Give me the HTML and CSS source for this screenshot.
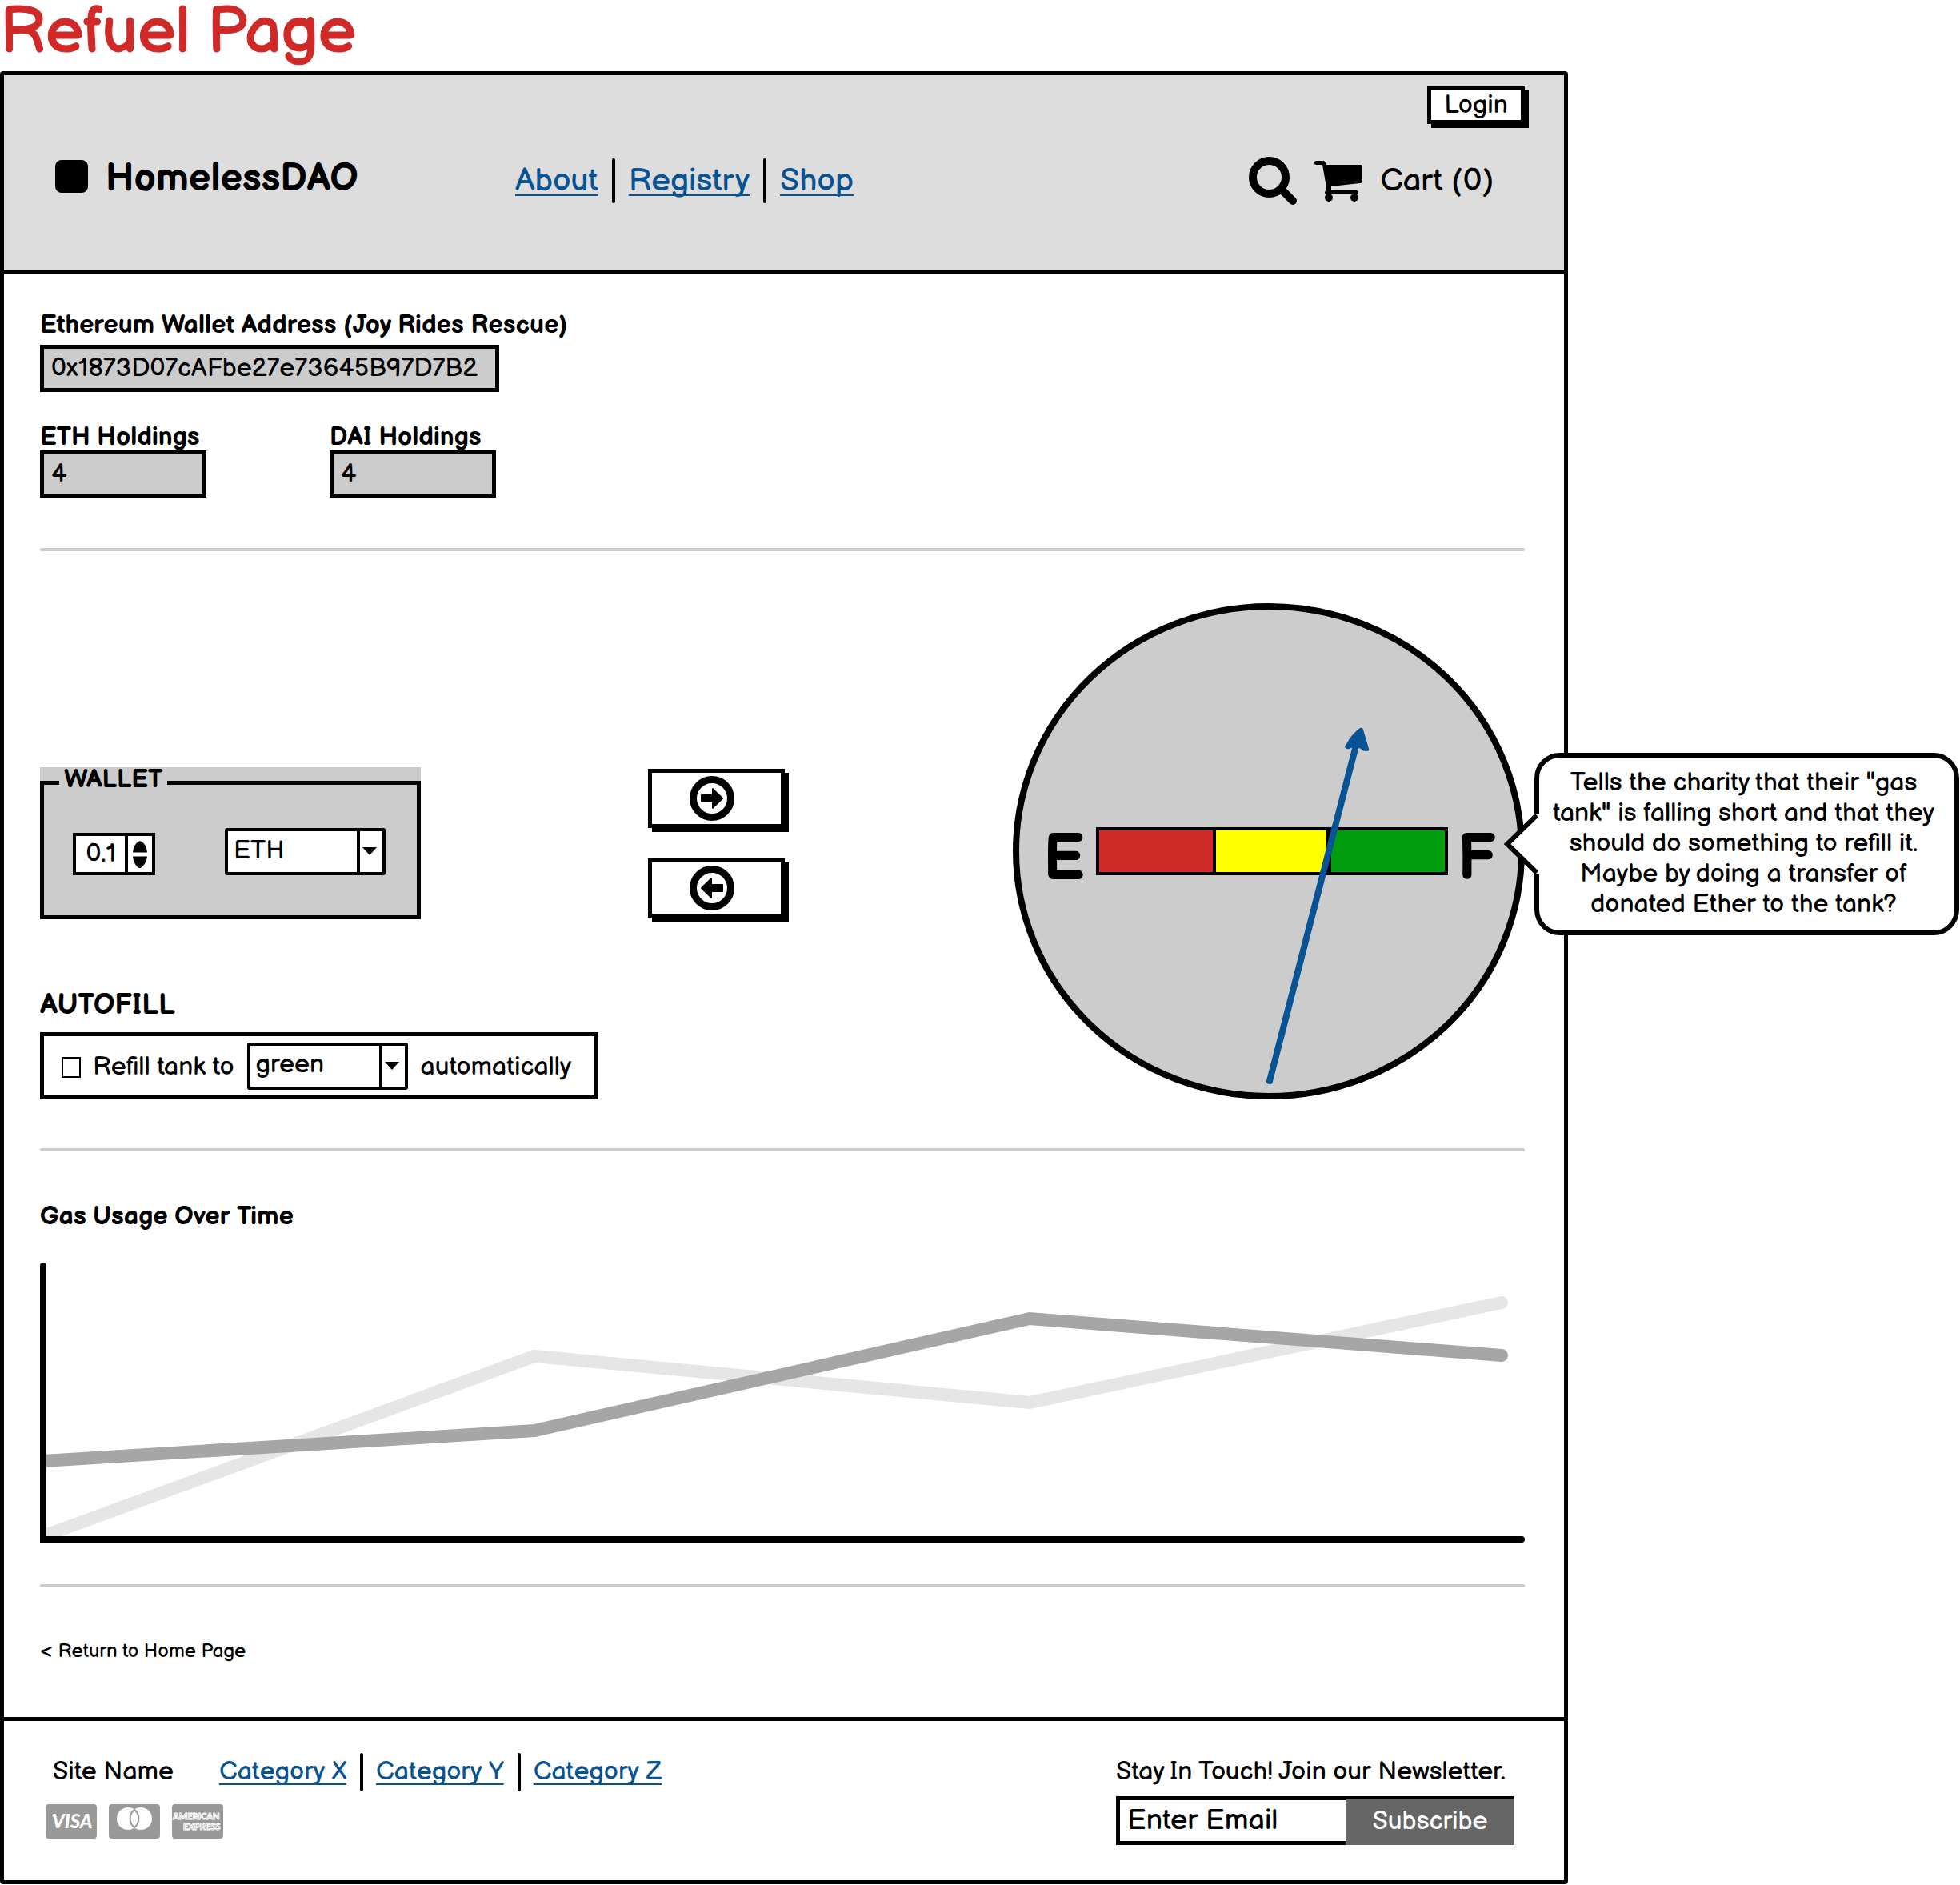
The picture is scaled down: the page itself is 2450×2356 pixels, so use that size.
FILE: index.html
```html
<!DOCTYPE html>
<html lang="en">
<head>
<meta charset="utf-8">
<meta name="viewport" content="width=device-width, initial-scale=1">
<title>Refuel Page</title>
<link rel="stylesheet" href="styles.css">
</head>
<body>
<h1 class="page-title">Refuel Page</h1>
<div class="frame">
  <header class="header">
    <div class="header-top"><button class="button login" type="button">Login</button></div>
    <div class="header-row">
      <div class="brand"><span class="brand-mark"></span>HomelessDAO</div>
      <nav class="links links-large" aria-label="Main">
        <a href="#about">About</a>
        <a href="#registry">Registry</a>
        <a href="#shop">Shop</a>
      </nav>
      <div class="tools">
        <svg class="icon" viewBox="0 0 60 60" aria-hidden="true">
          <circle cx="25.500" cy="25.500" r="20.500" fill="none" stroke="#000" stroke-width="10"/>
          <path d="M42 42L55 55" stroke="#000" stroke-width="10" stroke-linecap="round"/>
        </svg>
        <svg class="icon" viewBox="0 0 60 60" aria-hidden="true">
          <path d="M2.500 5H11q3 0 3.500 5H58q2 0 2 2v18q0 2.500-3 3L21 37v5h-6v-4L10 10H2.500a2.500 2.500 0 0 1 0-5z"/>
          <rect x="13" y="42" width="42" height="5" rx="2.500"/>
          <circle cx="18" cy="51" r="5"/>
          <circle cx="50" cy="51" r="5"/>
        </svg>
        <span class="cart-label">Cart (0)</span>
      </div>
    </div>
  </header>

  <main class="main">
    <section class="holdings">
      <div class="field field-wide">
        <label for="address">Ethereum Wallet Address (Joy Rides Rescue)</label>
        <input class="readout" id="address" type="text" value="0x1873D07cAFbe27e73645B97D7B2" readonly>
      </div>
      <div class="holdings-row">
        <div class="field">
          <label for="eth">ETH Holdings</label>
          <input class="readout" id="eth" type="text" value="4" readonly>
        </div>
        <div class="field">
          <label for="dai">DAI Holdings</label>
          <input class="readout" id="dai" type="text" value="4" readonly>
        </div>
      </div>
    </section>

    <hr class="rule">

    <section class="tank">
      <div class="controls">
        <div class="transfer">
          <div class="wallet">
            <fieldset class="wallet-set">
              <legend>WALLET</legend>
              <div class="wallet-row">
                <span class="stepper">
                  <input type="number" value="0.1" step="0.1" aria-label="Amount">
                  <svg class="stepper-arrows" viewBox="0 0 30 44" aria-hidden="true">
                    <path d="M6 20q1-10 7-13.500 2-1.500 4 0 6 3.500 7 13.500zM6 25q1 9 6 13.500 3 2 5 0 6-4.500 7-13.500z"/>
                  </svg>
                </span>
                <span class="picker">
                  <select aria-label="Currency"><option>ETH</option><option>DAI</option></select>
                  <svg class="picker-arrow" viewBox="0 0 18 10" aria-hidden="true"><path d="M0 0h18L9 10z"/></svg>
                </span>
              </div>
            </fieldset>
          </div>
          <div class="arrows">
            <button class="button arrow" type="button" aria-label="To tank">
              <svg class="arrow-icon" viewBox="0 0 56 56" aria-hidden="true">
                <circle cx="28" cy="28" r="23.500" fill="none" stroke="#000" stroke-width="9"/>
                <path d="M14 24q0-1 1-1h13v-7q1-2 2 0l11.500 11q1 1 0 2L30 40q-1 2-2 0v-7H15q-1 0-1-1z"/>
              </svg>
            </button>
            <button class="button arrow" type="button" aria-label="To wallet">
              <svg class="arrow-icon" viewBox="0 0 56 56" aria-hidden="true">
                <circle cx="28" cy="28" r="23.500" fill="none" stroke="#000" stroke-width="9"/>
                <path d="M42 24q0-1-1-1H28v-7q-1-2-2 0L14.500 27q-1 1 0 2L26 40q1 2 2 0v-7h13q1 0 1-1z"/>
              </svg>
            </button>
          </div>
        </div>
        <h2 class="autofill-title">AUTOFILL</h2>
        <div class="autofill">
          <label class="check"><input type="checkbox">Refill tank to</label>
          <span class="picker">
            <select aria-label="Level"><option>green</option><option>yellow</option><option>red</option></select>
            <svg class="picker-arrow" viewBox="0 0 18 10" aria-hidden="true"><path d="M0 0h18L9 10z"/></svg>
          </span>
          <span class="autofill-end">automatically</span>
        </div>
      </div>

      <div class="gauge">
        <svg class="gauge-dial" viewBox="0 0 640 620" role="img" aria-label="Tank gauge">
          <ellipse cx="320" cy="310" rx="316" ry="306" fill="#ccc" stroke="#000" stroke-width="8"/>
          <path d="M104 280h440v60H104z"/>
          <path d="M108 284h142v52H108z" fill="#cf2a27"/>
          <path d="M254 284h138v52H254z" fill="#ff0"/>
          <path d="M398 284h142v52H398z" fill="#009e0f"/>
          <text class="gauge-mark" x="64" y="345">E</text>
          <text class="gauge-mark" x="580" y="345">F</text>
          <path d="M321 597L429 178" stroke="#085394" stroke-width="8" stroke-linecap="round"/>
          <path d="M434 156q3-1 4 2l7 24q1 3-3 3-5 0-7-3l-6-3q-5 1-8 3-3 1-5-1-2-1 1-5 6-12 17-20z" fill="#085394"/>
        </svg>
        <aside class="bubble">
          <svg class="bubble-tail" viewBox="0 0 44 76" aria-hidden="true">
            <path d="M38 0H44V76H38z" fill="#fff"/>
            <path d="M41 2L4 38L41 74" fill="#fff" stroke="#000" stroke-width="6"/>
          </svg>
          <p>Tells the charity that their "gas tank" is falling short and that they should do something to refill it. Maybe by doing a transfer of donated Ether to the tank?</p>
        </aside>
      </div>
    </section>

    <hr class="rule">

    <section class="usage">
      <h2 class="usage-title">Gas Usage Over Time</h2>
      <svg class="chart" viewBox="0 0 1856 350" role="img" aria-label="Gas usage line chart">
        <g fill="none" stroke-width="16" stroke-linecap="round">
          <path d="M4 342L618 117L1237 175L1827 50" stroke="#e6e6e6"/>
          <path d="M4 248L618 210L1237 70L1827 116" stroke="#a6a6a6"/>
          <path d="M4 4V346H1852" stroke="#000" stroke-width="8"/>
        </g>
      </svg>
    </section>

    <hr class="rule">

    <a class="return" href="#home">&lt; Return to Home Page</a>
  </main>

  <footer class="footer">
    <div class="site">
      <div class="site-row">
        <span>Site Name</span>
        <nav class="links links-plain" aria-label="Categories">
          <a href="#x">Category X</a>
          <a href="#y">Category Y</a>
          <a href="#z">Category Z</a>
        </nav>
      </div>
      <div class="cards">
        <svg class="card" viewBox="0 0 64 43" role="img" aria-label="Visa">
          <rect width="64" height="43" rx="4" fill="#999"/>
          <path d="M7 13q5 0 6 5l1 4-3-4q-1-3-4-5z" fill="#fff"/>
          <text class="card-visa" x="8" y="30">VISA</text>
        </svg>
        <svg class="card" viewBox="0 0 64 43" role="img" aria-label="Mastercard">
          <rect width="64" height="43" rx="4" fill="#999"/>
          <circle cx="24" cy="18" r="14" fill="#fff"/>
          <circle cx="40" cy="18" r="14" fill="#fff"/>
          <path d="M32 7a14 14 0 0 1 0 22a14 14 0 0 1 0-22z" fill="#fff" stroke="#999" stroke-width="2"/>
        </svg>
        <svg class="card" viewBox="0 0 64 43" role="img" aria-label="American Express">
          <rect width="64" height="43" rx="4" fill="#999"/>
          <text class="card-amex" x="1" y="19">AMERICAN</text>
          <text class="card-amex" x="14" y="32">EXPRESS</text>
        </svg>
      </div>
    </div>
    <form class="newsletter">
      <label for="email">Stay In Touch! Join our Newsletter.</label>
      <div class="newsletter-box">
        <input id="email" type="email" placeholder="Enter Email">
        <button type="button">Subscribe</button>
      </div>
    </form>
  </footer>
</div>
</body>
</html>
```
FILE: styles.css
```css
* { box-sizing: border-box; }

body {
  margin: 0;
  background: #fff;
  color: #000;
  font-family: "Balsamiq Sans", Lato, "Open Sans", sans-serif;
  font-size: 32px;
  font-weight: 400;
  line-height: 40px;
}

h1, h2, p, fieldset, legend { margin: 0; padding: 0; }

input, select, button {
  margin: 0;
  border: 0;
  border-radius: 0;
  font: inherit;
  color: inherit;
}

svg { display: block; flex: none; }

.page-title {
  padding-bottom: 7px;
  color: #cf2a27;
  font-size: 80px;
  font-weight: 400;
  line-height: 82px;
  -webkit-text-stroke: 1px #cf2a27;
}

.frame {
  width: 80%;
  border: 5px solid #000;
  border-radius: 4px;
}

/* Header */
.header {
  padding: 13px 49px 86px 64px;
  border-bottom: 5px solid #000;
  background: #ddd;
}

.header-top { display: flex; justify-content: flex-end; }

.button {
  border: 5px solid #000;
  background: #fff;
  box-shadow: 5px 5px #000;
}

.login { width: 122px; height: 48px; line-height: 40px; padding: 0; }

.header-row {
  display: grid;
  grid-template-columns: 575px auto 1fr;
  align-items: center;
  height: 56px;
  margin-top: 41px;
}

.brand {
  display: flex;
  align-items: center;
  gap: 22px;
  padding-bottom: 4px;
  font-size: 48px;
  font-weight: 700;
}

.brand-mark { width: 41px; height: 41px; margin-bottom: 8px; border-radius: 8px; background: #000; }

.links { display: flex; align-items: center; }

.links a {
  color: #085394;
  text-decoration: underline;
  text-decoration-thickness: 2px;
  text-underline-offset: 5px;
  text-decoration-skip-ink: none;
}

.links a + a {
  display: flex;
  align-items: center;
  height: 48px;
}

.links a + a::before {
  content: "";
  width: 4px;
  height: 48px;
  margin: 0 16px 0 17px;
  border-radius: 2px;
  background: #000;
}

.links-large { font-size: 40px; }
.links-large a + a::before { height: 56px; margin: 0 17px; }
.links-plain { font-kerning: none; }

.tools {
  display: flex;
  align-items: center;
  justify-content: flex-end;
  gap: 22px;
  padding-right: 39px;
  font-size: 40px;
}

.icon { width: 60px; height: 60px; }

/* Main */
.main { padding: 48px 49px 66px 45px; }

.field { display: flex; flex-direction: column; width: 208px; }
.field-wide { width: 574px; gap: 8px; }
.field label { font-weight: 700; line-height: 32px; white-space: nowrap; }

.readout {
  width: 100%;
  height: 59px;
  padding: 0 9px;
  border: 5px solid #000;
  background: #ccc;
}

.holdings-row { display: flex; gap: 154px; margin-top: 41px; }

.rule {
  height: 4px;
  margin: 61px 0 0;
  border: 0;
  border-radius: 2px;
  background: #ccc;
}

.holdings + .rule { margin-top: 63px; }

.tank {
  display: flex;
  justify-content: space-between;
  align-items: flex-end;
  margin-top: 65px;
}

.transfer { display: flex; align-items: center; gap: 284px; }

.wallet { width: 476px; background: #ccc; }

.wallet-set { border: 5px solid #000; height: 190px; padding: 0 19px; }

.wallet-set legend { padding: 0 6px; font-weight: 700; line-height: 32px; height: 38px; }

.wallet-row {
  display: flex;
  align-items: flex-end;
  justify-content: space-between;
  padding: 38px 20px 0 17px;
}

.stepper {
  display: flex;
  width: 103px;
  height: 53px;
  border: 4px solid #000;
  background: #fff;
}

.stepper input {
  width: 65px;
  padding: 0 11px 0 0;
  border-right: 4px solid #000;
  background: #fff;
  text-align: right;
  appearance: textfield;
}

.stepper input::-webkit-inner-spin-button { appearance: none; margin: 0; }

.stepper-arrows { width: 30px; height: 45px; }

.picker {
  display: flex;
  position: relative;
  width: 201px;
  height: 59px;
  border: 4px solid #000;
  border-radius: 3px;
  background: #fff;
}

.picker select {
  flex: 1;
  padding: 0 0 2px 7px;
  background: linear-gradient(#000, #000) right 28px top / 4px 100% no-repeat;
  appearance: none;
}

.picker-arrow { position: absolute; right: 7px; top: 20px; width: 18px; height: 10px; pointer-events: none; }

.arrows { display: flex; flex-direction: column; gap: 38px; }

.arrow {
  display: flex;
  align-items: center;
  justify-content: center;
  width: 171px;
  height: 74px;
  padding: 0 12px 0 0;
}

.arrow-icon { width: 56px; height: 56px; }

.autofill-title { margin-top: 88px; font-size: 36px; font-weight: 700; }

.autofill {
  display: flex;
  align-items: center;
  gap: 16px;
  width: 698px;
  height: 84px;
  margin-top: 13px;
  padding: 0 22px;
  border: 5px solid #000;
}

.check, .autofill-end { padding-top: 4px; white-space: nowrap; }
.check { display: flex; align-items: center; gap: 15px; }

.check input {
  width: 24px;
  height: 26px;
  border: 2px solid #000;
  background: #fff;
  appearance: none;
}

/* Gauge */
.gauge { position: relative; width: 640px; }
.gauge-dial { width: 100%; }
.gauge-mark { font-size: 80px; font-weight: 700; text-anchor: middle; }

.bubble {
  position: absolute;
  left: calc(100% + 12px);
  top: 187px;
  width: 531px;
  height: 228px;
  padding: 13px 16px 0 8px;
  border: 6px solid #000;
  border-radius: 32px;
  background: #fff;
  line-height: 38px;
  text-align: center;
}

.bubble-tail { position: absolute; left: -44px; top: 70px; width: 44px; height: 76px; }

/* Usage */
.usage { padding-top: 62px; }
.usage-title { font-size: 32px; font-weight: 700; }
.chart { width: 100%; margin: 37px 0 -9px; }

.return {
  display: block;
  margin-top: 64px;
  color: #000;
  font-size: 24px;
  line-height: 32px;
  text-decoration: none;
}

/* Footer */
.footer {
  display: flex;
  justify-content: space-between;
  padding: 40px 62px 44px 52px;
  border-top: 5px solid #000;
}

.site-row { display: flex; align-items: center; height: 48px; padding-left: 9px; gap: 57px; }

.cards { display: flex; gap: 15px; margin-top: 16px; }
.card { width: 64px; height: 43px; }
.card-visa { fill: #fff; font: italic 900 24px Lato, sans-serif; }
.card-amex { fill: #999; stroke: #fff; stroke-width: 1px; font: 900 11px Lato, sans-serif; }

.newsletter { width: 498px; padding-top: 4px; }
.newsletter label { display: block; white-space: nowrap; }

.newsletter-box {
  display: flex;
  height: 61px;
  margin-top: 10px;
  border: 5px solid #000;
  border-right: 0;
}

.newsletter-box input {
  flex: 1;
  min-width: 0;
  padding: 0 9px;
  background: #fff;
  font-size: 36px;
}

.newsletter-box input::placeholder { color: #000; opacity: 1; }

.newsletter-box button {
  width: 211px;
  height: 58px;
  margin-top: -2px;
  padding-bottom: 2px;
  background: #666;
  color: #fff;
}
```
